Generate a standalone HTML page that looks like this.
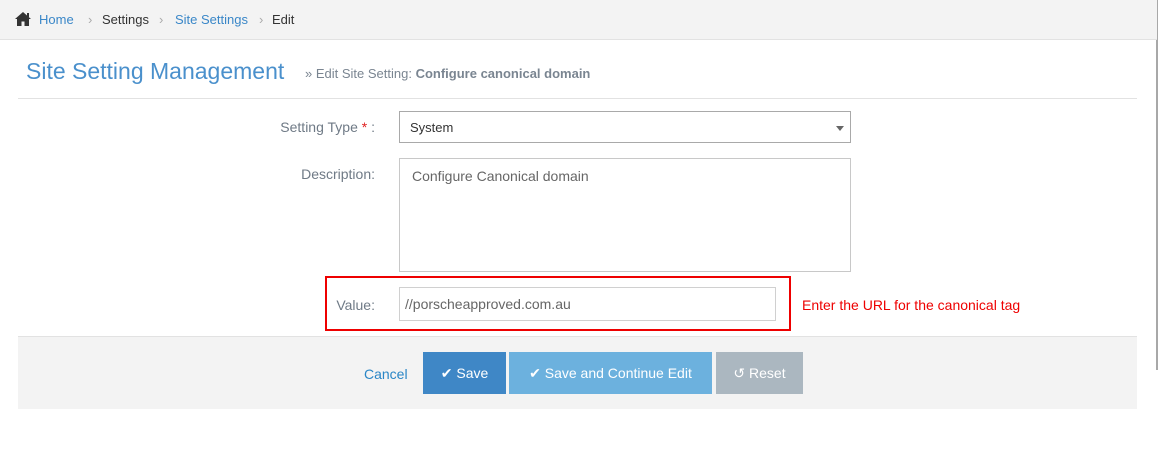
<!DOCTYPE html>
<html><head><style>
*{box-sizing:border-box;margin:0;padding:0}
body{width:1159px;height:451px;background:#fff;font-family:"Liberation Sans",sans-serif;position:relative;overflow:hidden;font-size:14px}
.abs{position:absolute}
.bc{left:0;top:0;width:1157px;height:40px;background:#f3f3f3;border-bottom:1px solid #e2e2e2}
.bc span{position:absolute;top:12px;font-size:13px}
.lbl{color:#6f7a86;font-size:14px;text-align:right}
.box{border:1px solid #c8c8c8;background:#fff;color:#555}
.btn{top:352px;height:42px;color:#fff;font-size:14px;line-height:42px;text-align:center}
</style></head><body>
<div class="abs" style="left:1156px;top:0;width:2px;height:370px;background:#a8a8a8"></div>
<div class="abs bc">
<svg class="abs" style="left:14px;top:11px" width="18" height="15" viewBox="0 0 18 15"><path d="M9 1L1 8h2v7h4.5v-4.5h3V15H15V8h2L9 1z" fill="#333"/><rect x="13" y="2" width="2" height="4" fill="#333"/></svg>
<span style="left:39px;color:#3a87c8">Home</span>
<span style="left:88px;color:#aaa">›</span>
<span style="left:102px;color:#333">Settings</span>
<span style="left:159px;color:#aaa">›</span>
<span style="left:175px;color:#3a87c8">Site Settings</span>
<span style="left:259px;color:#aaa">›</span>
<span style="left:272px;color:#333">Edit</span>
</div>
<div class="abs" style="left:26px;top:58px;font-size:23px;color:#4a90cc;font-weight:300">Site Setting Management</div>
<div class="abs" style="left:305px;top:66px;font-size:13px;color:#7a8591">» Edit Site Setting: <b>Configure canonical domain</b></div>
<div class="abs" style="left:18px;top:98px;width:1119px;height:1px;background:#e2e2e2"></div>
<div class="abs lbl" style="left:200px;width:175px;top:119px">Setting Type <span style="color:#e02222">*</span> :</div>
<div class="abs box" style="left:399px;top:111px;width:452px;height:32px;border-color:#a9a9a9;color:#333;font-size:13px;padding:8px 10px">System
<div class="abs" style="right:6px;top:14px;border-left:4px solid transparent;border-right:4px solid transparent;border-top:5px solid #666"></div></div>
<div class="abs lbl" style="left:200px;width:175px;top:166px">Description:</div>
<div class="abs box" style="left:399px;top:158px;width:452px;height:114px;padding:9px 12px;color:#666">Configure Canonical domain</div>
<div class="abs" style="left:325px;top:276px;width:466px;height:55px;border:2px solid #e00"></div>
<div class="abs lbl" style="left:300px;width:75px;top:297px">Value:</div>
<div class="abs box" style="left:399px;top:287px;width:377px;height:34px;padding:8px 5px;color:#666;font-size:14px;border-color:#d0d0d0">//porscheapproved.com.au</div>
<div class="abs" style="left:802px;top:297px;color:#e00;font-size:14px">Enter the URL for the canonical tag</div>
<div class="abs" style="left:18px;top:336px;width:1119px;height:73px;background:#f3f3f3;border-top:1px solid #e2e2e2"></div>
<div class="abs" style="left:364px;top:366px;color:#2a86c6;font-size:14px">Cancel</div>
<div class="abs btn" style="left:423px;width:83px;background:#3f87c6">✔ Save</div>
<div class="abs btn" style="left:509px;width:203px;background:#6cb1de">✔ Save and Continue Edit</div>
<div class="abs btn" style="left:716px;width:87px;background:#abb7c0">↺ Reset</div>
</body></html>
